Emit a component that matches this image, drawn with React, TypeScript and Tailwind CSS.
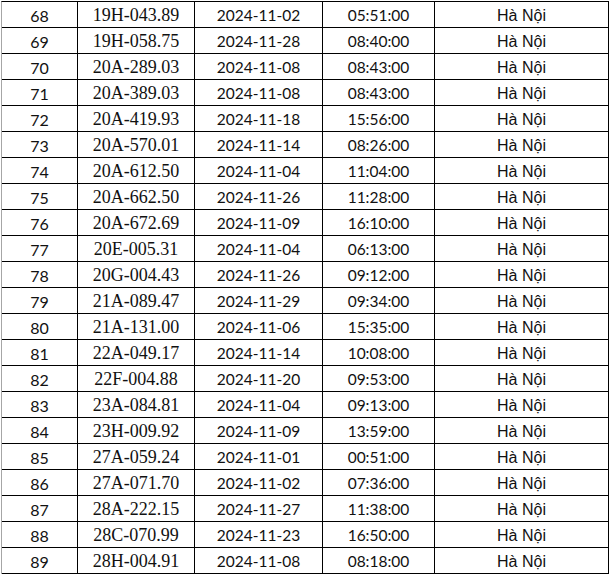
const rows: [number, string, string, string][] = [
  [68, '19H-043.89', '2024-11-02', '05:51:00'],
  [69, '19H-058.75', '2024-11-28', '08:40:00'],
  [70, '20A-289.03', '2024-11-08', '08:43:00'],
  [71, '20A-389.03', '2024-11-08', '08:43:00'],
  [72, '20A-419.93', '2024-11-18', '15:56:00'],
  [73, '20A-570.01', '2024-11-14', '08:26:00'],
  [74, '20A-612.50', '2024-11-04', '11:04:00'],
  [75, '20A-662.50', '2024-11-26', '11:28:00'],
  [76, '20A-672.69', '2024-11-09', '16:10:00'],
  [77, '20E-005.31', '2024-11-04', '06:13:00'],
  [78, '20G-004.43', '2024-11-26', '09:12:00'],
  [79, '21A-089.47', '2024-11-29', '09:34:00'],
  [80, '21A-131.00', '2024-11-06', '15:35:00'],
  [81, '22A-049.17', '2024-11-14', '10:08:00'],
  [82, '22F-004.88', '2024-11-20', '09:53:00'],
  [83, '23A-084.81', '2024-11-04', '09:13:00'],
  [84, '23H-009.92', '2024-11-09', '13:59:00'],
  [85, '27A-059.24', '2024-11-01', '00:51:00'],
  [86, '27A-071.70', '2024-11-02', '07:36:00'],
  [87, '28A-222.15', '2024-11-27', '11:38:00'],
  [88, '28C-070.99', '2024-11-23', '16:50:00'],
  [89, '28H-004.91', '2024-11-08', '08:18:00'],
]

const sans = "font-['Lato',sans-serif]"

export default function App() {
  return (
    <div className="bg-white w-[609px] h-[575px] pt-[1px] pl-[1px] overflow-hidden text-[#111]">
      <div className="border-l border-[#a6a6a6] border-t border-t-black">
        {rows.map(([stt, plate, date, time]) => (
          <div key={stt} className="flex h-[26px] border-b border-black">
            <div className={`w-[76px] border-r border-black flex items-center justify-center pt-[2px] text-[16px] ${sans}`}>
              {stt}
            </div>
            <div className="w-[117px] border-r border-black flex items-center justify-center pt-[2px] text-[18px] font-['Liberation_Serif',serif]">
              {plate}
            </div>
            <div className={`w-[128px] border-r border-black flex items-center justify-center pt-[2px] text-[15.5px] ${sans}`}>
              {date}
            </div>
            <div className={`w-[112px] border-r border-black flex items-center justify-center pt-[2px] text-[15.5px] ${sans}`}>
              {time}
            </div>
            <div className="w-[174px] border-r border-black flex items-center justify-center pt-[2px] text-[16px] font-['Liberation_Sans',sans-serif]">
              Hà Nội
            </div>
          </div>
        ))}
      </div>
    </div>
  )
}
